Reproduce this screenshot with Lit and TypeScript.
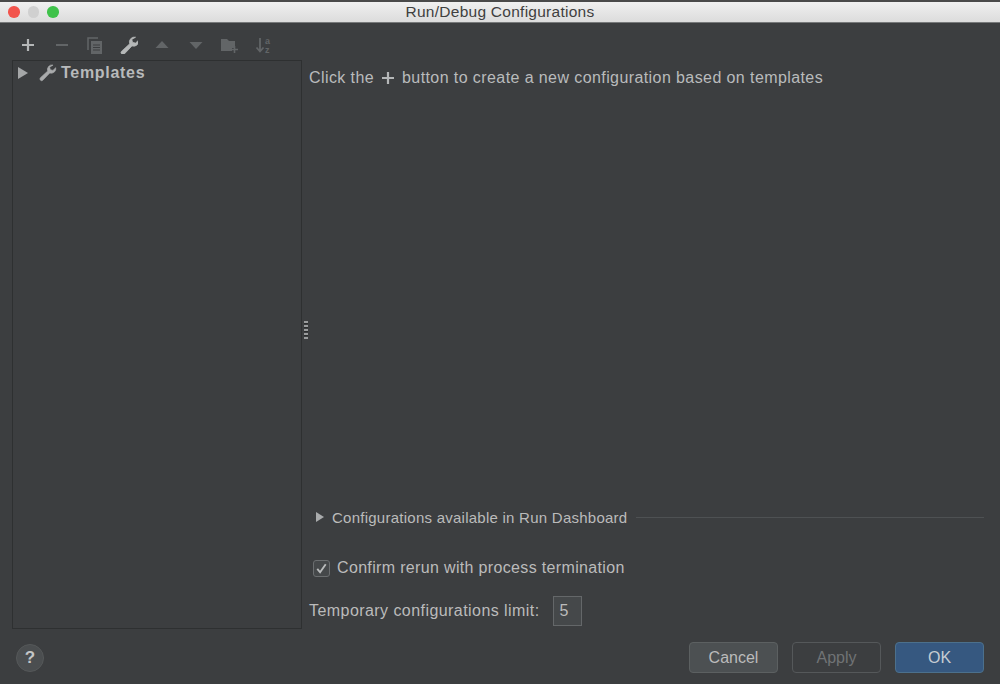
import { LitElement, css, html, svg } from "lit";
import { customElement } from "lit/decorators.js";

const wrench = svg`<path d="M15.600 1.200a5 5 0 0 0-5.900 6.600L1.600 15.200a1.900 1.900 0 0 0 2.800 2.700l7.600-8a5 5 0 0 0 6.600-5.800l-3.100 3-2.900-.8-.8-2.800z" fill="currentColor" stroke="currentColor" stroke-width="0.700"/>`;

const toolbarIcons = [
	{ on: true, body: svg`<path d="M9 3v12M3 9h12" stroke="currentColor" stroke-width="2.200"/>` },
	{ on: false, body: svg`<path d="M3 9h12" stroke="currentColor" stroke-width="2"/>` },
	{
		on: false,
		body: svg`<path d="M2 14V2h10" fill="none" stroke="currentColor" stroke-width="1.500"/><path d="M5 5h11v13H5z" fill="currentColor"/><path d="M7 9h7M7 11.500h7M7 14h7" stroke="#3c3e40" stroke-width="1"/>`,
	},
	{ on: true, body: wrench },
	{ on: false, body: svg`<path d="M9 5l6.500 7h-13z" fill="currentColor"/>` },
	{ on: false, body: svg`<path d="M2.500 6h13L9 13z" fill="currentColor"/>` },
	{
		on: false,
		body: svg`<path d="M1 3h6l2 2h6v7h-3v3H1z" fill="currentColor"/><path d="M14.500 10v7M11 13.500h7" stroke="currentColor" stroke-width="1.600"/>`,
	},
	{
		on: false,
		body: svg`<path d="M6 2v13M2.500 11.500L6 15.500l3.500-4" fill="none" stroke="currentColor" stroke-width="1.800"/><text x="11" y="7.500" font-size="9" font-weight="bold" fill="currentColor">a</text><text x="11" y="17" font-size="9" font-weight="bold" fill="currentColor">z</text>`,
	},
];

@customElement("app-root")
export class AppRoot extends LitElement {
	static styles = css`
		:host {
			display: flex;
			flex-direction: column;
			width: 1000px;
			height: 684px;
			background: #3c3e40;
			font-family: "Liberation Sans", Arial, sans-serif;
			color: #bbbbbb;
			overflow: hidden;
		}

		.titlebar {
			height: 20px;
			flex: none;
			display: flex;
			align-items: center;
			position: relative;
			border-top: 2px solid #4a4a4a;
			border-bottom: 1px solid #77797a;
			background: linear-gradient(#f0f0f0, #dcdcdc);
		}

		.lights {
			display: flex;
			gap: 8px;
			padding-left: 8px;
		}

		.light {
			width: 11.500px;
			height: 11.500px;
			border-radius: 50%;
		}

		.title {
			position: absolute;
			left: 0;
			right: 0;
			text-align: center;
			font-size: 15.500px;
			color: #3f3f3f;
			letter-spacing: 0.260px;
		}

		.body {
			flex: none;
			height: 606px;
			display: flex;
			padding-left: 12px;
		}

		.left {
			width: 290px;
			flex: none;
			display: flex;
			flex-direction: column;
		}

		.toolbar {
			height: 37px;
			flex: none;
			display: flex;
			align-items: center;
			padding: 6px 0 0 7px;
			box-sizing: border-box;
			gap: 15.500px;
		}

		.tool {
			width: 18px;
			height: 18px;
			color: #626567;
			display: block;
		}

		.tool text {
			font-family: "Liberation Sans", Arial, sans-serif;
		}

		.tool.on {
			color: #b5b7b8;
		}

		.tree {
			flex: none;
			height: 569px;
			border: 1px solid #2e3031;
			padding: 3px 0 0 5px;
			box-sizing: border-box;
		}

		.node {
			display: flex;
			align-items: center;
			height: 18px;
			font-weight: bold;
			font-size: 16px;
			letter-spacing: 0.700px;
			color: #b8babb;
		}

		.node .arrow {
			width: 10px;
			height: 12px;
			color: #a5a7a8;
			margin-right: 11px;
		}

		.node .wrench {
			width: 18px;
			height: 18px;
			color: #a9abac;
			margin-right: 4px;
		}

		.splitter {
			width: 7px;
			flex: none;
			display: flex;
			align-items: center;
			justify-content: center;
		}

		.grip {
			width: 4px;
			height: 18px;
			margin-top: 8px;
			background: repeating-linear-gradient(#9a9c9d 0 2px, #2b2d2e 2px 3px, #3c3e40 3px 4px);
		}

		.right {
			flex: 1;
			display: flex;
			flex-direction: column;
			padding-right: 16px;
		}

		.message {
			margin-top: 44px;
			height: 22px;
			display: flex;
			align-items: center;
			font-size: 16px;
			letter-spacing: 0.410px;
			white-space: nowrap;
			color: #b9bbbc;
		}

		.message svg {
			width: 14px;
			height: 14px;
			margin: 0 7px;
			color: #b5b7b8;
		}

		.section {
			margin-top: 417px;
			height: 22px;
			display: flex;
			align-items: center;
			font-size: 15px;
			letter-spacing: 0.250px;
			padding-left: 7px;
			white-space: nowrap;
		}

		.section .arrow {
			width: 8px;
			height: 10px;
			color: #a9abac;
			margin-right: 8px;
		}

		.rule {
			flex: 1;
			height: 1px;
			margin-left: 9px;
			background: #4e5153;
		}

		.check-row {
			margin-top: 29px;
			height: 22px;
			display: flex;
			align-items: center;
			padding-left: 4px;
			font-size: 16px;
			letter-spacing: 0.340px;
			white-space: nowrap;
		}

		.check {
			width: 15px;
			height: 15px;
			margin-right: 7px;
			border: 1px solid #6b6e70;
			border-radius: 3px;
			background: #45484a;
			color: #b9bbbc;
		}

		.check svg {
			display: block;
			width: 15px;
			height: 15px;
		}

		.limit-row {
			margin-top: 17px;
			height: 30px;
			display: flex;
			align-items: center;
			font-size: 16px;
			letter-spacing: 0.440px;
			white-space: nowrap;
		}

		.spin {
			width: 29px;
			height: 30px;
			margin-left: 13px;
			border: 1px solid #646769;
			background: #45484a;
			display: flex;
			align-items: center;
			padding-left: 6px;
			box-sizing: border-box;
		}

		.footer {
			flex: 1;
			display: flex;
			align-items: center;
			padding: 2px 16px 0;
		}

		.help {
			width: 28px;
			height: 28px;
			border-radius: 50%;
			background: #4b4e50;
			border: 1px solid #555859;
			box-sizing: border-box;
			display: flex;
			align-items: center;
			justify-content: center;
			font-weight: bold;
			font-size: 17px;
			color: #c4c6c7;
		}

		.buttons {
			margin-left: auto;
			display: flex;
			gap: 14px;
		}

		.btn {
			width: 89px;
			height: 31px;
			border-radius: 4px;
			box-sizing: border-box;
			display: flex;
			align-items: center;
			justify-content: center;
			font-size: 16px;
			border: 1px solid #5c6061;
			background: #4c5052;
			color: #bbbbbb;
		}

		.btn.off {
			background: #3c3e40;
			border-color: #55585a;
			color: #707375;
		}

		.btn.ok {
			background: #365880;
			border-color: #4c708c;
			color: #c6ccd2;
		}
	`;

	render() {
		return html`
			<div class="titlebar">
				<div class="lights">
					<div class="light" style="background:#f2544c"></div>
					<div class="light" style="background:#d0d0d0"></div>
					<div class="light" style="background:#3fc24a"></div>
				</div>
				<div class="title">Run/Debug Configurations</div>
			</div>
			<div class="body">
				<div class="left">
					<div class="toolbar">
						${toolbarIcons.map(
							(i) =>
								html`<svg class="tool ${i.on ? "on" : ""}" viewBox="0 0 18 18">${i.body}</svg>`,
						)}
					</div>
					<div class="tree">
						<div class="node">
							<svg class="arrow" viewBox="0 0 10 12"><path d="M0 0l10 6-10 6z" fill="currentColor" /></svg>
							<svg class="wrench" viewBox="0 0 20 20">${wrench}</svg>
							Templates
						</div>
					</div>
				</div>
				<div class="splitter"><div class="grip"></div></div>
				<div class="right">
					<div class="message">
						Click the
						<svg viewBox="0 0 14 14"><path d="M7 1v12M1 7h12" stroke="currentColor" stroke-width="2.200" /></svg>
						button to create a new configuration based on templates
					</div>
					<div class="section">
						<svg class="arrow" viewBox="0 0 8 10"><path d="M0 0l8 5-8 5z" fill="currentColor" /></svg>
						Configurations available in Run Dashboard
						<div class="rule"></div>
					</div>
					<div class="check-row">
						<div class="check">
							<svg viewBox="0 0 16 16"><path d="M3.500 8.500l3 3.500 6-8.500" fill="none" stroke="currentColor" stroke-width="2" /></svg>
						</div>
						Confirm rerun with process termination
					</div>
					<div class="limit-row">
						Temporary configurations limit:
						<div class="spin">5</div>
					</div>
				</div>
			</div>
			<div class="footer">
				<div class="help">?</div>
				<div class="buttons">
					<div class="btn">Cancel</div>
					<div class="btn off">Apply</div>
					<div class="btn ok">OK</div>
				</div>
			</div>
		`;
	}
}
